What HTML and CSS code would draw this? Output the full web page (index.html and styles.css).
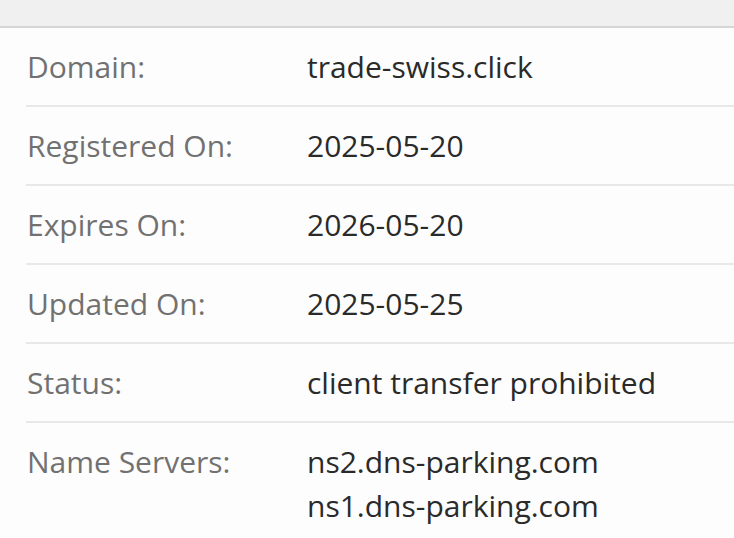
FILE: index.html
```html
<!DOCTYPE html>
<html>
<head>
<meta charset="utf-8">
<link rel="stylesheet" href="styles.css">
</head>
<body>
<div class="topbar"></div>
<div class="info">
  <div class="row"><div class="label">Domain:</div><div class="value">trade-swiss.click</div></div>
  <div class="row"><div class="label">Registered On:</div><div class="value">2025-05-20</div></div>
  <div class="row"><div class="label">Expires On:</div><div class="value">2026-05-20</div></div>
  <div class="row"><div class="label">Updated On:</div><div class="value">2025-05-25</div></div>
  <div class="row"><div class="label">Status:</div><div class="value">client transfer prohibited</div></div>
  <div class="row last"><div class="label">Name Servers:</div><div class="value">ns2.dns-parking.com<br>ns1.dns-parking.com</div></div>
</div>
</body>
</html>
```

FILE: styles.css
```css
html, body {
  margin: 0;
  padding: 0;
  background: #fdfdfd;
  font-family: "Open Sans", "Noto Sans", sans-serif;
}
.topbar {
  height: 26px;
  background: #f0f0f0;
  border-bottom: 2px solid #d6d6d6;
}
.info {
  padding-left: 26px;
}
.row {
  display: grid;
  grid-template-columns: 280px 1fr;
  padding: 17px 0 16px 1px;
  border-bottom: 2px solid #e8e8e8;
  font-size: 30px;
  line-height: 44px;
}
.row.last {
  border-bottom: none;
}
.label {
  color: #717171;
}
.value {
  color: #2a2a2a;
}
```
